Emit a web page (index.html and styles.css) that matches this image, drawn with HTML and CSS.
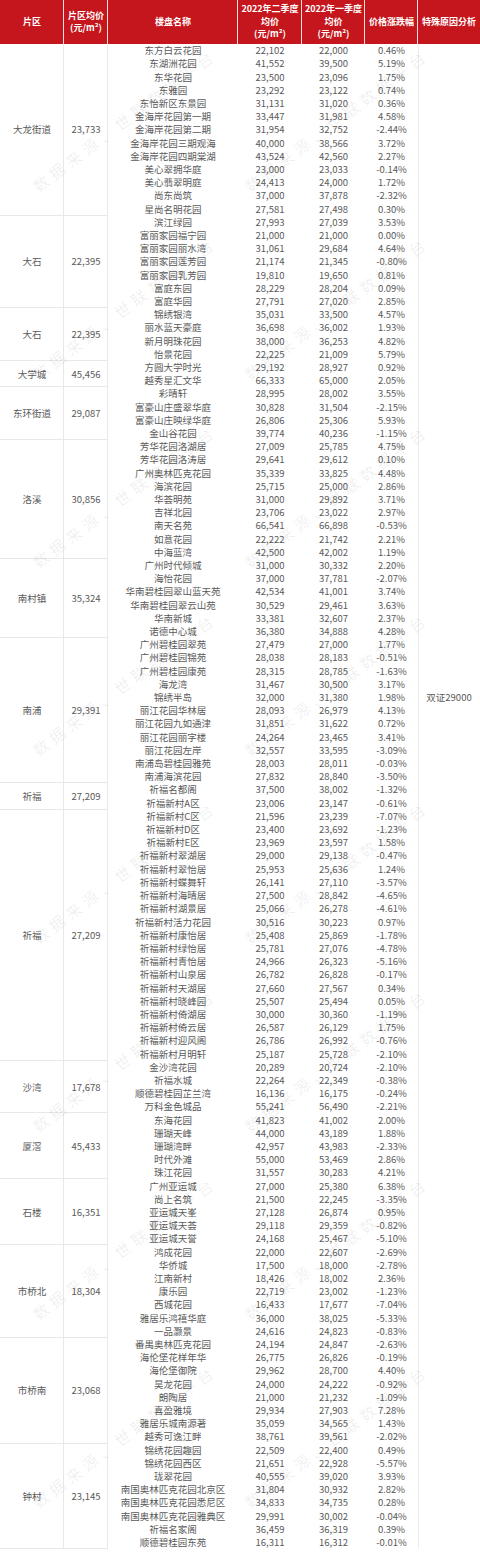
FILE: index.html
```html
<!DOCTYPE html>
<html lang="zh-CN">
<head>
<meta charset="utf-8">
<title>片区均价</title>
<link rel="stylesheet" href="styles.css">
</head>
<body>
<div class="sheet">
<table class="price-table">
<colgroup>
<col class="c-area"><col class="c-avg"><col class="c-name"><col class="c-q2"><col class="c-q1"><col class="c-chg"><col class="c-note">
</colgroup>
<thead>
<tr>
<th>片区</th>
<th>片区均价<br>(元/m²)</th>
<th>楼盘名称</th>
<th>2022年二季度<br>均价<br>(元/m²)</th>
<th>2022年一季度<br>均价<br>(元/m²)</th>
<th>价格涨跌幅</th>
<th class="last">特殊原因分析</th>
</tr>
</thead>
<tbody>
<tr><td class="area" rowspan="13">大龙街道</td><td class="avg" rowspan="13">23,733</td><td>东方白云花园</td><td>22,102</td><td>22,000</td><td>0.46%</td><td class="note"></td></tr>
<tr><td>东湖洲花园</td><td>41,552</td><td>39,500</td><td>5.19%</td><td class="note"></td></tr>
<tr><td>东华花园</td><td>23,500</td><td>23,096</td><td>1.75%</td><td class="note"></td></tr>
<tr><td>东雅园</td><td>23,292</td><td>23,122</td><td>0.74%</td><td class="note"></td></tr>
<tr><td>东怡新区东景园</td><td>31,131</td><td>31,020</td><td>0.36%</td><td class="note"></td></tr>
<tr><td>金海岸花园第一期</td><td>33,447</td><td>31,981</td><td>4.58%</td><td class="note"></td></tr>
<tr><td>金海岸花园第二期</td><td>31,954</td><td>32,752</td><td>-2.44%</td><td class="note"></td></tr>
<tr><td>金海岸花园三期观海</td><td>40,000</td><td>38,566</td><td>3.72%</td><td class="note"></td></tr>
<tr><td>金海岸花园四期棠湖</td><td>43,524</td><td>42,560</td><td>2.27%</td><td class="note"></td></tr>
<tr><td>美心翠拥华庭</td><td>23,000</td><td>23,033</td><td>-0.14%</td><td class="note"></td></tr>
<tr><td>美心翡翠明庭</td><td>24,413</td><td>24,000</td><td>1.72%</td><td class="note"></td></tr>
<tr><td>尚东尚筑</td><td>37,000</td><td>37,878</td><td>-2.32%</td><td class="note"></td></tr>
<tr><td>星尚名明花园</td><td>27,581</td><td>27,498</td><td>0.30%</td><td class="note"></td></tr>

<tr><td class="area" rowspan="7">大石</td><td class="avg" rowspan="7">22,395</td><td>滨江绿园</td><td>27,993</td><td>27,039</td><td>3.53%</td><td class="note"></td></tr>
<tr><td>富丽家园福宁园</td><td>21,000</td><td>21,000</td><td>0.00%</td><td class="note"></td></tr>
<tr><td>富丽家园丽水湾</td><td>31,061</td><td>29,684</td><td>4.64%</td><td class="note"></td></tr>
<tr><td>富丽家园莲芳园</td><td>21,174</td><td>21,345</td><td>-0.80%</td><td class="note"></td></tr>
<tr><td>富丽家园乳芳园</td><td>19,810</td><td>19,650</td><td>0.81%</td><td class="note"></td></tr>
<tr><td>富庭东园</td><td>28,229</td><td>28,204</td><td>0.09%</td><td class="note"></td></tr>
<tr><td>富庭华园</td><td>27,791</td><td>27,020</td><td>2.85%</td><td class="note"></td></tr>

<tr><td class="area" rowspan="4">大石</td><td class="avg" rowspan="4">22,395</td><td>锦绣银湾</td><td>35,031</td><td>33,500</td><td>4.57%</td><td class="note"></td></tr>
<tr><td>丽水蓝天豪庭</td><td>36,698</td><td>36,002</td><td>1.93%</td><td class="note"></td></tr>
<tr><td>新月明珠花园</td><td>38,000</td><td>36,253</td><td>4.82%</td><td class="note"></td></tr>
<tr><td>怡景花园</td><td>22,225</td><td>21,009</td><td>5.79%</td><td class="note"></td></tr>

<tr><td class="area" rowspan="2">大学城</td><td class="avg" rowspan="2">45,456</td><td>方圆大学时光</td><td>29,192</td><td>28,927</td><td>0.92%</td><td class="note"></td></tr>
<tr><td>越秀星汇文华</td><td>66,333</td><td>65,000</td><td>2.05%</td><td class="note"></td></tr>

<tr><td class="area" rowspan="4">东环街道</td><td class="avg" rowspan="4">29,087</td><td>彩晴轩</td><td>28,995</td><td>28,002</td><td>3.55%</td><td class="note"></td></tr>
<tr><td>富豪山庄盛翠华庭</td><td>30,828</td><td>31,504</td><td>-2.15%</td><td class="note"></td></tr>
<tr><td>富豪山庄映绿华庭</td><td>26,806</td><td>25,306</td><td>5.93%</td><td class="note"></td></tr>
<tr><td>金山谷花园</td><td>39,774</td><td>40,236</td><td>-1.15%</td><td class="note"></td></tr>

<tr><td class="area" rowspan="9">洛溪</td><td class="avg" rowspan="9">30,856</td><td>芳华花园洛湖居</td><td>27,009</td><td>25,785</td><td>4.75%</td><td class="note"></td></tr>
<tr><td>芳华花园洛涛居</td><td>29,641</td><td>29,612</td><td>0.10%</td><td class="note"></td></tr>
<tr><td>广州奥林匹克花园</td><td>35,339</td><td>33,825</td><td>4.48%</td><td class="note"></td></tr>
<tr><td>海滨花园</td><td>25,715</td><td>25,000</td><td>2.86%</td><td class="note"></td></tr>
<tr><td>华荟明苑</td><td>31,000</td><td>29,892</td><td>3.71%</td><td class="note"></td></tr>
<tr><td>吉祥北园</td><td>23,706</td><td>23,022</td><td>2.97%</td><td class="note"></td></tr>
<tr><td>南天名苑</td><td>66,541</td><td>66,898</td><td>-0.53%</td><td class="note"></td></tr>
<tr><td>如意花园</td><td>22,222</td><td>21,742</td><td>2.21%</td><td class="note"></td></tr>
<tr><td>中海蓝湾</td><td>42,500</td><td>42,002</td><td>1.19%</td><td class="note"></td></tr>

<tr><td class="area" rowspan="6">南村镇</td><td class="avg" rowspan="6">35,324</td><td>广州时代倾城</td><td>31,000</td><td>30,332</td><td>2.20%</td><td class="note"></td></tr>
<tr><td>海怡花园</td><td>37,000</td><td>37,781</td><td>-2.07%</td><td class="note"></td></tr>
<tr><td>华南碧桂园翠山蓝天苑</td><td>42,534</td><td>41,001</td><td>3.74%</td><td class="note"></td></tr>
<tr><td>华南碧桂园翠云山苑</td><td>30,529</td><td>29,461</td><td>3.63%</td><td class="note"></td></tr>
<tr><td>华南新城</td><td>33,381</td><td>32,607</td><td>2.37%</td><td class="note"></td></tr>
<tr><td>诺德中心城</td><td>36,380</td><td>34,888</td><td>4.28%</td><td class="note"></td></tr>

<tr><td class="area" rowspan="11">南浦</td><td class="avg" rowspan="11">29,391</td><td>广州碧桂园翠苑</td><td>27,479</td><td>27,000</td><td>1.77%</td><td class="note"></td></tr>
<tr><td>广州碧桂园锦苑</td><td>28,038</td><td>28,183</td><td>-0.51%</td><td class="note"></td></tr>
<tr><td>广州碧桂园康苑</td><td>28,315</td><td>28,785</td><td>-1.63%</td><td class="note"></td></tr>
<tr><td>海龙湾</td><td>31,467</td><td>30,500</td><td>3.17%</td><td class="note"></td></tr>
<tr><td>锦绣半岛</td><td>32,000</td><td>31,380</td><td>1.98%</td><td class="note">双证29000</td></tr>
<tr><td>丽江花园华林居</td><td>28,093</td><td>26,979</td><td>4.13%</td><td class="note"></td></tr>
<tr><td>丽江花园九如通津</td><td>31,851</td><td>31,622</td><td>0.72%</td><td class="note"></td></tr>
<tr><td>丽江花园丽字楼</td><td>24,264</td><td>23,465</td><td>3.41%</td><td class="note"></td></tr>
<tr><td>丽江花园左岸</td><td>32,557</td><td>33,595</td><td>-3.09%</td><td class="note"></td></tr>
<tr><td>南浦岛碧桂园雅苑</td><td>28,003</td><td>28,011</td><td>-0.03%</td><td class="note"></td></tr>
<tr><td>南浦海滨花园</td><td>27,832</td><td>28,840</td><td>-3.50%</td><td class="note"></td></tr>

<tr><td class="area" rowspan="2">祈福</td><td class="avg" rowspan="2">27,209</td><td>祈福名都阁</td><td>37,500</td><td>38,002</td><td>-1.32%</td><td class="note"></td></tr>
<tr><td>祈福新村A区</td><td>23,006</td><td>23,147</td><td>-0.61%</td><td class="note"></td></tr>

<tr><td class="area" rowspan="19">祈福</td><td class="avg" rowspan="19">27,209</td><td>祈福新村C区</td><td>21,596</td><td>23,239</td><td>-7.07%</td><td class="note"></td></tr>
<tr><td>祈福新村D区</td><td>23,400</td><td>23,692</td><td>-1.23%</td><td class="note"></td></tr>
<tr><td>祈福新村E区</td><td>23,969</td><td>23,597</td><td>1.58%</td><td class="note"></td></tr>
<tr><td>祈福新村翠湖居</td><td>29,000</td><td>29,138</td><td>-0.47%</td><td class="note"></td></tr>
<tr><td>祈福新村翠怡居</td><td>25,953</td><td>25,636</td><td>1.24%</td><td class="note"></td></tr>
<tr><td>祈福新村蝶舞轩</td><td>26,141</td><td>27,110</td><td>-3.57%</td><td class="note"></td></tr>
<tr><td>祈福新村海晴居</td><td>27,500</td><td>28,842</td><td>-4.65%</td><td class="note"></td></tr>
<tr><td>祈福新村湖景居</td><td>25,066</td><td>26,278</td><td>-4.61%</td><td class="note"></td></tr>
<tr><td>祈福新村活力花园</td><td>30,516</td><td>30,223</td><td>0.97%</td><td class="note"></td></tr>
<tr><td>祈福新村康怡居</td><td>25,408</td><td>25,869</td><td>-1.78%</td><td class="note"></td></tr>
<tr><td>祈福新村绿怡居</td><td>25,781</td><td>27,076</td><td>-4.78%</td><td class="note"></td></tr>
<tr><td>祈福新村青怡居</td><td>24,966</td><td>26,323</td><td>-5.16%</td><td class="note"></td></tr>
<tr><td>祈福新村山泉居</td><td>26,782</td><td>26,828</td><td>-0.17%</td><td class="note"></td></tr>
<tr><td>祈福新村天湖居</td><td>27,660</td><td>27,567</td><td>0.34%</td><td class="note"></td></tr>
<tr><td>祈福新村晓峰园</td><td>25,507</td><td>25,494</td><td>0.05%</td><td class="note"></td></tr>
<tr><td>祈福新村倚湖居</td><td>30,000</td><td>30,360</td><td>-1.19%</td><td class="note"></td></tr>
<tr><td>祈福新村倚云居</td><td>26,587</td><td>26,129</td><td>1.75%</td><td class="note"></td></tr>
<tr><td>祈福新村迎风阁</td><td>26,786</td><td>26,992</td><td>-0.76%</td><td class="note"></td></tr>
<tr><td>祈福新村月明轩</td><td>25,187</td><td>25,728</td><td>-2.10%</td><td class="note"></td></tr>

<tr><td class="area" rowspan="4">沙湾</td><td class="avg" rowspan="4">17,678</td><td>金沙湾花园</td><td>20,289</td><td>20,724</td><td>-2.10%</td><td class="note"></td></tr>
<tr><td>祈福水城</td><td>22,264</td><td>22,349</td><td>-0.38%</td><td class="note"></td></tr>
<tr><td>顺德碧桂园芷兰湾</td><td>16,136</td><td>16,175</td><td>-0.24%</td><td class="note"></td></tr>
<tr><td>万科金色城品</td><td>55,241</td><td>56,490</td><td>-2.21%</td><td class="note"></td></tr>

<tr><td class="area" rowspan="5">厦滘</td><td class="avg" rowspan="5">45,433</td><td>东海花园</td><td>41,823</td><td>41,002</td><td>2.00%</td><td class="note"></td></tr>
<tr><td>珊瑚天峰</td><td>44,000</td><td>43,189</td><td>1.88%</td><td class="note"></td></tr>
<tr><td>珊瑚湾畔</td><td>42,957</td><td>43,983</td><td>-2.33%</td><td class="note"></td></tr>
<tr><td>时代外滩</td><td>55,000</td><td>53,469</td><td>2.86%</td><td class="note"></td></tr>
<tr><td>珠江花园</td><td>31,557</td><td>30,283</td><td>4.21%</td><td class="note"></td></tr>

<tr><td class="area" rowspan="5">石楼</td><td class="avg" rowspan="5">16,351</td><td>广州亚运城</td><td>27,000</td><td>25,380</td><td>6.38%</td><td class="note"></td></tr>
<tr><td>尚上名筑</td><td>21,500</td><td>22,245</td><td>-3.35%</td><td class="note"></td></tr>
<tr><td>亚运城天峯</td><td>27,128</td><td>26,874</td><td>0.95%</td><td class="note"></td></tr>
<tr><td>亚运城天荟</td><td>29,118</td><td>29,359</td><td>-0.82%</td><td class="note"></td></tr>
<tr><td>亚运城天誉</td><td>24,168</td><td>25,467</td><td>-5.10%</td><td class="note"></td></tr>

<tr><td class="area" rowspan="7">市桥北</td><td class="avg" rowspan="7">18,304</td><td>鸿成花园</td><td>22,000</td><td>22,607</td><td>-2.69%</td><td class="note"></td></tr>
<tr><td>华侨城</td><td>17,500</td><td>18,000</td><td>-2.78%</td><td class="note"></td></tr>
<tr><td>江南新村</td><td>18,426</td><td>18,002</td><td>2.36%</td><td class="note"></td></tr>
<tr><td>康乐园</td><td>22,719</td><td>23,002</td><td>-1.23%</td><td class="note"></td></tr>
<tr><td>西城花园</td><td>16,433</td><td>17,677</td><td>-7.04%</td><td class="note"></td></tr>
<tr><td>雅居乐鸿禧华庭</td><td>36,000</td><td>38,025</td><td>-5.33%</td><td class="note"></td></tr>
<tr><td>一品灏景</td><td>24,616</td><td>24,823</td><td>-0.83%</td><td class="note"></td></tr>

<tr><td class="area" rowspan="8">市桥南</td><td class="avg" rowspan="8">23,068</td><td>番禺奥林匹克花园</td><td>24,194</td><td>24,847</td><td>-2.63%</td><td class="note"></td></tr>
<tr><td>海伦堡花样年华</td><td>26,775</td><td>26,826</td><td>-0.19%</td><td class="note"></td></tr>
<tr><td>海伦堡御院</td><td>29,962</td><td>28,700</td><td>4.40%</td><td class="note"></td></tr>
<tr><td>昊龙花园</td><td>24,000</td><td>24,222</td><td>-0.92%</td><td class="note"></td></tr>
<tr><td>朗陶居</td><td>21,000</td><td>21,232</td><td>-1.09%</td><td class="note"></td></tr>
<tr><td>喜盈雅境</td><td>29,934</td><td>27,903</td><td>7.28%</td><td class="note"></td></tr>
<tr><td>雅居乐城南源著</td><td>35,059</td><td>34,565</td><td>1.43%</td><td class="note"></td></tr>
<tr><td>越秀可逸江畔</td><td>38,761</td><td>39,561</td><td>-2.02%</td><td class="note"></td></tr>

<tr><td class="area" rowspan="8">钟村</td><td class="avg" rowspan="8">23,145</td><td>锦绣花园趣园</td><td>22,509</td><td>22,400</td><td>0.49%</td><td class="note"></td></tr>
<tr><td>锦绣花园西区</td><td>21,651</td><td>22,928</td><td>-5.57%</td><td class="note"></td></tr>
<tr><td>珑翠花园</td><td>40,555</td><td>39,020</td><td>3.93%</td><td class="note"></td></tr>
<tr><td>南国奥林匹克花园北京区</td><td>31,804</td><td>30,932</td><td>2.82%</td><td class="note"></td></tr>
<tr><td>南国奥林匹克花园悉尼区</td><td>34,833</td><td>34,735</td><td>0.28%</td><td class="note"></td></tr>
<tr><td>南国奥林匹克花园雅典区</td><td>29,991</td><td>30,002</td><td>-0.04%</td><td class="note"></td></tr>
<tr><td>祈福名家阁</td><td>36,459</td><td>36,319</td><td>0.39%</td><td class="note"></td></tr>
<tr><td>顺德碧桂园东苑</td><td>16,311</td><td>16,312</td><td>-0.01%</td><td class="note"></td></tr>
</tbody>
</table>

<div class="watermarks" aria-hidden="true">
<span class="wm c1 r0">数据来源、世联数据平台</span><span class="wm c2 r0">数据来源、世联数据平台</span>
<span class="wm c1 r1">数据来源、世联数据平台</span><span class="wm c2 r1">数据来源、世联数据平台</span>
<span class="wm c1 r2">数据来源、世联数据平台</span><span class="wm c2 r2">数据来源、世联数据平台</span>
<span class="wm c1 r3">数据来源、世联数据平台</span><span class="wm c2 r3">数据来源、世联数据平台</span>
<span class="wm c1 r4">数据来源、世联数据平台</span><span class="wm c2 r4">数据来源、世联数据平台</span>
<span class="wm c1 r5">数据来源、世联数据平台</span><span class="wm c2 r5">数据来源、世联数据平台</span>
<span class="wm c1 r6">数据来源、世联数据平台</span><span class="wm c2 r6">数据来源、世联数据平台</span>
<span class="wm c1 r7">数据来源、世联数据平台</span><span class="wm c2 r7">数据来源、世联数据平台</span>
</div>
</div>
</body>
</html>
```
FILE: styles.css
```css
* { box-sizing: border-box; }
html, body { margin: 0; padding: 0; background: #fff; }
body { font-family: "Noto Sans CJK SC", "Noto Sans", sans-serif; }

.sheet { position: relative; width: 480px; overflow: hidden; }

.price-table {
  width: 480px;
  table-layout: fixed;
  border-collapse: separate;
  border-spacing: 0;
}
.c-area { width: 64px; }
.c-avg { width: 44px; }
.c-name { width: 130px; }
.c-q2 { width: 64px; }
.c-q1 { width: 63px; }
.c-chg { width: 53px; }
.c-note { width: 62px; }

.price-table th {
  height: 44px;
  padding: 0;
  background: #c5161d;
  color: #fff;
  font-size: 9px;
  font-weight: 700;
  line-height: 12.5px;
  text-align: center;
  vertical-align: middle;
  white-space: nowrap;
  box-shadow: inset -1px 0 0 rgba(255, 255, 255, 0.85);
}
.price-table th.last { box-shadow: none; }

.price-table td {
  height: 13.21px;
  padding: 0;
  font-size: 9.5px;
  line-height: 13px;
  color: #5a5a5a;
  text-align: center;
  vertical-align: middle;
  white-space: nowrap;
}
.price-table td.area,
.price-table td.avg {
  box-shadow: inset -1px -1px 0 #e8e8e8;
}
.price-table td.note {
  box-shadow: inset 1px 0 0 #ececec;
}

.watermarks { position: absolute; inset: 0; pointer-events: none; }
.wm {
  position: absolute;
  font-size: 16px;
  line-height: 16px;
  letter-spacing: 4.5px;
  color: rgba(0, 0, 0, 0.07);
  white-space: nowrap;
  transform-origin: 0 50%;
  transform: rotate(-37deg);
}
.c1 { left: 34px; }
.c2 { left: 246px; }
.r0 { top: 180px; }
.r1 { top: 368px; }
.r2 { top: 556px; }
.r3 { top: 744px; }
.r4 { top: 932px; }
.r5 { top: 1120px; }
.r6 { top: 1308px; }
.r7 { top: 1496px; }
```
